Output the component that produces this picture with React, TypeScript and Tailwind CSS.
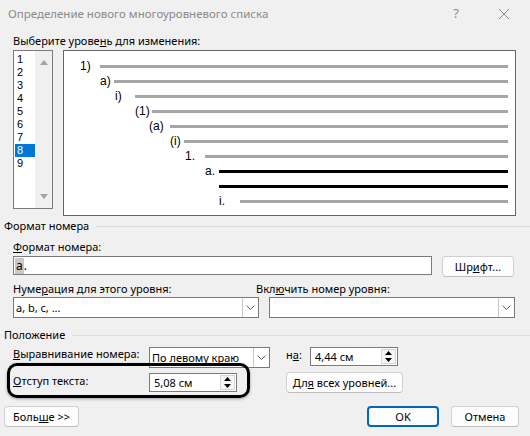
import React from "react";

const levels = ["1", "2", "3", "4", "5", "6", "7", "8", "9"];

// x positions inside the preview box (relative to the window)
const previewRows: { label: string; textX: number; lineX: number; dark?: boolean }[] = [
  { label: "1)", textX: 80, lineX: 100 },
  { label: "a)", textX: 100, lineX: 114 },
  { label: "i)", textX: 115, lineX: 135 },
  { label: "(1)", textX: 135, lineX: 152 },
  { label: "(a)", textX: 149, lineX: 170 },
  { label: "(i)", textX: 170, lineX: 184 },
  { label: "1.", textX: 185, lineX: 205 },
  { label: "a.", textX: 205, lineX: 219, dark: true },
  { label: "", textX: 219, lineX: 219, dark: true },
  { label: "i.", textX: 219, lineX: 240 },
];

function Chevron() {
  return (
    <svg width="9" height="5" viewBox="0 0 9 5" className="text-[#606060]">
      <polyline points="0.5,0.5 4.5,4.5 8.5,0.5" fill="none" stroke="currentColor" strokeWidth="1" />
    </svg>
  );
}

function Combo({ width, value, low }: { width: string; value?: string; low?: boolean }) {
  return (
    <div className={`flex h-[21px] ${width} items-stretch border border-[#7a7a7a] bg-white`}>
      <div
        className={`flex flex-1 overflow-hidden whitespace-nowrap pl-[2px] leading-[16px] ${
          low ? "items-end pb-[1px]" : "items-center"
        }`}
      >
        <span>{value}</span>
      </div>
      <div className="flex w-[16px] items-center justify-center border-l border-[#c8c8c8]">
        <Chevron />
      </div>
    </div>
  );
}

function Spin({ value }: { value: string }) {
  return (
    <div className="flex h-[19px] w-[88px] items-stretch border border-[#7a7a7a] bg-white">
      <div className="flex flex-1 items-center pl-[4px] leading-[16px]">
        <span>{value}</span>
      </div>
      <div className="my-[1px] mr-[1px] flex w-[15px] flex-col items-center justify-center gap-[3px] border border-[#d6d6d6] bg-[#f5f5f5]">
        <svg width="7" height="4" viewBox="0 0 7 4">
          <polygon points="3.5,0 7,4 0,4" fill="#000" />
        </svg>
        <svg width="7" height="4" viewBox="0 0 7 4">
          <polygon points="0,0 7,0 3.5,4" fill="#000" />
        </svg>
      </div>
    </div>
  );
}

function Btn({ children, width, primary }: { children: React.ReactNode; width: string; primary?: boolean }) {
  return (
    <div
      className={`flex h-[21px] ${width} items-center justify-center rounded-[4px] bg-[#fdfdfd] leading-[16px] ${
        primary ? "border-2 border-[#0067c0]" : "border border-[#d0d0d0] border-b-[#bdbdbd]"
      }`}
    >
      <span className="whitespace-nowrap">{children}</span>
    </div>
  );
}

function GroupTitle({ children }: { children: React.ReactNode }) {
  return (
    <div className="flex h-[16px] items-center pl-[4px] leading-[16px]">
      <span className="whitespace-nowrap">{children}</span>
      <span className="ml-[7px] h-px flex-1 bg-[#dcdcdc]" />
    </div>
  );
}

export default function App() {
  return (
    <div
      className="relative h-[436px] w-[530px] overflow-hidden bg-[#f0f0f0] text-[11px] text-black"
      style={{ fontFamily: "'Noto Sans', 'DejaVu Sans', sans-serif" }}
    >
      {/* title bar */}
      <div className="flex h-[28px] items-center pl-[8px] text-[11.5px] text-[#8a8a8a]">
        <span className="flex-1">Определение нового многоуровневого списка</span>
        <span className="w-[20px] text-center text-[13px]">?</span>
        <span className="ml-[28px] mr-[16px] flex w-[20px] justify-center">
          <svg width="12" height="12" viewBox="0 0 12 12">
            <path d="M1 1 L11 11 M11 1 L1 11" stroke="#8a8a8a" strokeWidth="1" />
          </svg>
        </span>
      </div>

      <div className="mt-[5px] h-[16px] pl-[13px] leading-[16px]">
        Выберите урове<u>н</u>ь для изменения:
      </div>

      <div className="mt-[1px] flex items-start pl-[13px]">
        {/* level list */}
        <div
          className="flex h-[159px] w-[40px] border border-[#7a7a7a] bg-white text-[11px]"
          style={{ fontFamily: "'Liberation Sans', Arial, sans-serif" }}
        >
          <div className="flex w-[21px] flex-col pt-[2px] pl-[1px]">
            {levels.map((l) => (
              <div
                key={l}
                className={`h-[13px] pl-[2px] leading-[13px] ${l === "8" ? "bg-[#0078d7] text-white" : ""}`}
              >
                {l}
              </div>
            ))}
          </div>
          <div className="flex flex-1 flex-col items-center justify-between bg-[#f0f0f0] py-[9px]">
            <svg width="8" height="5" viewBox="0 0 8 5">
              <polygon points="4,0 8,5 0,5" fill="#a3a3a3" />
            </svg>
            <svg width="8" height="5" viewBox="0 0 8 5">
              <polygon points="0,0 8,0 4,5" fill="#a3a3a3" />
            </svg>
          </div>
        </div>

        {/* preview */}
        <div
          className="ml-[10px] h-[166px] w-[453px] border border-[#646464] bg-white pt-[8px] pr-[7px]"
          style={{ fontFamily: "'Liberation Sans', Arial, sans-serif" }}
        >
          {previewRows.map((r, i) => (
            <div key={i} className="flex h-[15px] items-center">
              <span
                className="shrink-0 text-[12px] leading-[15px]"
                style={{ marginLeft: r.textX - 64, width: r.lineX - r.textX }}
              >
                {r.label}
              </span>
              <span className={`h-[3px] flex-1 ${r.dark ? "bg-black" : "bg-[#a6a6a6]"}`} />
            </div>
          ))}
        </div>
      </div>

      <div className="mt-[2px]">
        <GroupTitle>Формат номера</GroupTitle>
      </div>

      <div className="mt-[5px] h-[16px] pl-[13px] leading-[16px]">
        <u>Ф</u>ормат номера:
      </div>
      <div className="mt-[1px] flex items-start pl-[13px]">
        <div className="flex h-[19px] w-[419px] items-center border border-[#7a7a7a] bg-white pl-[1px] text-[12px] leading-[16px]">
          <span className="bg-[#c8c8c8] px-[1px]">a</span>
          <span>.</span>
        </div>
        <div className="ml-[10px]">
          <Btn width="w-[72px]">
            Шр<u>и</u>фт...
          </Btn>
        </div>
      </div>

      <div className="mt-[4px] flex h-[16px] leading-[16px]">
        <div className="w-[256px] pl-[13px]">
          Нуме<u>р</u>ация для этого уровня:
        </div>
        <div>
          Вкл<u>ю</u>чить номер уровня:
        </div>
      </div>
      <div className="flex gap-[10px] pl-[13px]">
        <Combo width="w-[246px]" value="a, b, c, ..." />
        <Combo width="w-[246px]" />
      </div>

      <div className="mt-[9px]">
        <GroupTitle>Положение</GroupTitle>
      </div>

      <div className="mt-[4px] flex h-[21px] items-start pl-[13px]">
        <div className="-mt-px w-[136px] whitespace-nowrap leading-[16px]">
          <u>В</u>ыравнивание номера:
        </div>
        <Combo width="w-[121px]" value="По левому краю" low />
        <div className="ml-[16px] w-[24px] leading-[16px]">
          н<u>а</u>:
        </div>
        <Spin value="4,44 см" />
      </div>

      <div className="mt-[4px] flex h-[21px] items-start pl-[13px]">
        <div className="mt-px w-[136px] whitespace-nowrap leading-[16px]">
          <u>О</u>тступ текста:
        </div>
        <div className="mt-px">
          <Spin value="5,08 см" />
        </div>
        <div className="ml-[49px]">
          <Btn width="w-[117px]">
            Дл<u>я</u> всех уровней...
          </Btn>
        </div>
      </div>

      <div className="mt-[13px] flex pl-[4px]">
        <Btn width="w-[75px]">
          Боль<u>ш</u>е &gt;&gt;
        </Btn>
        <div className="ml-[288px]">
          <Btn width="w-[72px]" primary>
            OK
          </Btn>
        </div>
        <div className="ml-[12px]">
          <Btn width="w-[68px]">Отмена</Btn>
        </div>
      </div>

      {/* highlight drawn over the dialog */}
      <div className="pointer-events-none absolute left-[7px] top-[363px] h-[35px] w-[243px] rounded-[10px] border-[3px] border-black shadow-[0_1px_3px_rgba(0,0,0,0.35)]" />
    </div>
  );
}
